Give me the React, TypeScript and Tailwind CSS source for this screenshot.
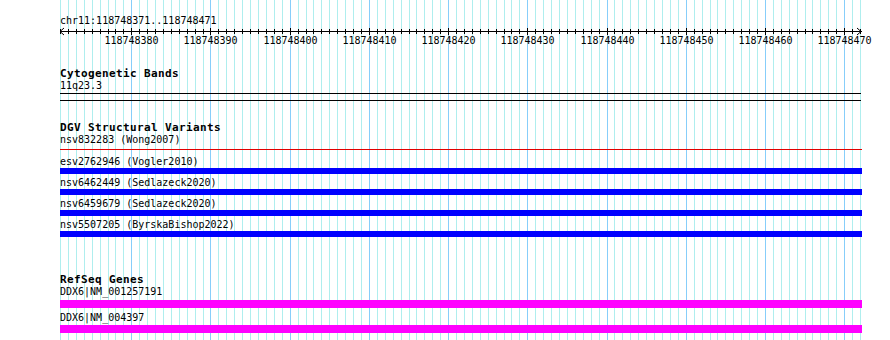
import React from "react";

const X0 = 60;
const S = 800 / 101;
const xs = Array.from({ length: 102 }, (_, k) => Math.round(X0 + k * S));
const MINOR = "#afeeee";
const MAJOR = "#87cefa";

function Label({ children }: { children: React.ReactNode }) {
  return (
    <div className="h-[12px] text-[10px] leading-[12px] whitespace-pre">{children}</div>
  );
}

function Title({ children }: { children: React.ReactNode }) {
  return (
    <div className="h-[13px] text-[11px] leading-[13px] font-bold tracking-[0.38px] whitespace-pre">
      {children}
    </div>
  );
}

function Ruler() {
  return (
    <svg width={830} height={20} className="block" shapeRendering="crispEdges">
      <rect x={0} y={4} width={802} height={1} fill="#000" />
      {xs.map((x, k) => {
        const major = k % 10 === 9;
        const rx = x - X0;
        return (
          <rect
            key={k}
            x={rx}
            y={major ? 1 : 2}
            width={1}
            height={major ? 7 : 5}
            fill="#000"
          />
        );
      })}
      <path d="M4 1 L0 4.5 L4 8" fill="none" stroke="#000" strokeWidth={1} shapeRendering="auto" />
      <path d="M797 1 L801 4.5 L797 8" fill="none" stroke="#000" strokeWidth={1} shapeRendering="auto" />
      {xs.map((x, k) =>
        k % 10 === 9 ? (
          <text
            key={"t" + k}
            x={x - X0 + 0.5}
            y={17}
            textAnchor="middle"
            fontSize={10}
            fontFamily="'DejaVu Sans Mono', monospace"
            fill="#000"
          >
            {118748371 + k}
          </text>
        ) : null
      )}
    </svg>
  );
}

function BlueFeature({ label }: { label: string }) {
  return (
    <>
      <div className="mt-[3px]">
        <Label>{label}</Label>
      </div>
      <div className="h-[6px] w-[802px] bg-[#0000ff]" />
    </>
  );
}

export default function App() {
  return (
    <div className="relative w-[890px] h-[340px] overflow-hidden bg-white text-black font-['DejaVu_Sans_Mono',monospace]">
      <svg className="absolute inset-0" width={890} height={340} shapeRendering="crispEdges">
        {xs.map((x, k) => (
          <rect key={k} x={x} y={0} width={1} height={340} fill={k % 10 === 9 ? MAJOR : MINOR} />
        ))}
      </svg>
      <div className="relative flex flex-col pl-[60px]">
        <div className="mt-[15px]">
          <Label>chr11:118748371..118748471</Label>
        </div>
        <Ruler />

        <div className="mt-[20px]">
          <Title>Cytogenetic Bands</Title>
        </div>
        <Label>11q23.3</Label>
        <div className="mt-[1px] h-px w-[801px] bg-black" />
        <div className="mt-[6px] h-px w-[801px] bg-black" />

        <div className="mt-[20px]">
          <Title>DGV Structural Variants</Title>
        </div>
        <Label>nsv832283 (Wong2007)</Label>
        <div className="mt-[3px] h-px w-[802px] bg-[#e00000]" />
        <div className="mt-[3px]" />
        <BlueFeature label="esv2762946 (Vogler2010)" />
        <BlueFeature label="nsv6462449 (Sedlazeck2020)" />
        <BlueFeature label="nsv6459679 (Sedlazeck2020)" />
        <BlueFeature label="nsv5507205 (ByrskaBishop2022)" />

        <div className="mt-[36px]">
          <Title>RefSeq Genes</Title>
        </div>
        <Label>DDX6|NM_001257191</Label>
        <div className="mt-[2px] h-[8px] w-[802px] bg-[#ff00ff]" />
        <div className="mt-[4px]">
          <Label>DDX6|NM_004397</Label>
        </div>
        <div className="mt-[1px] h-[8px] w-[802px] bg-[#ff00ff]" />
      </div>
    </div>
  );
}
